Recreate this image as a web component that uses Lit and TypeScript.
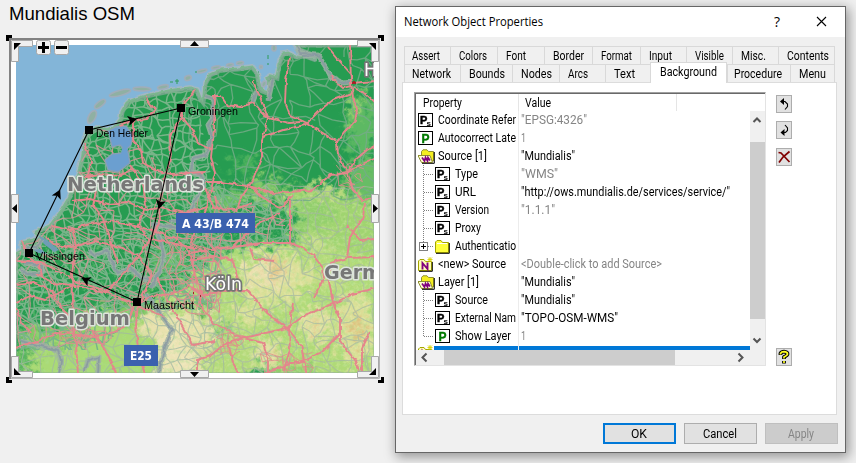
import { LitElement, html, svg, css, TemplateResult } from "lit";
import { customElement } from "lit/decorators.js";
import { classMap } from "lit/directives/class-map.js";
import { styleMap } from "lit/directives/style-map.js";

// Text run fitted to a fixed advance width.
const label = (text: string, w: number, cls = "") => html`<svg class="label ${cls}" width=${w + 2} height="18">
  <text x="0" y="13" textLength=${w} lengthAdjust="spacingAndGlyphs">${text}</text></svg>`;

function rng(seed: number) {
  let s = seed;
  return () => {
    s = (s * 1664525 + 1013904223) % 4294967296;
    return s / 4294967296;
  };
}

// Irregular road mesh: a jittered lattice with some of its links left out.
function mesh(x0: number, y0: number, x1: number, y1: number, step: number, seed: number, keep: number): string {
  const r = rng(seed);
  const cols = Math.ceil((x1 - x0) / step) + 1;
  const rows = Math.ceil((y1 - y0) / step) + 1;
  const pts: number[][][] = [];
  for (let j = 0; j < rows; j++) {
    pts.push([]);
    for (let i = 0; i < cols; i++) {
      pts[j].push([x0 + (i + (r() - 0.5) * 0.95) * step, y0 + (j + (r() - 0.5) * 0.95) * step]);
    }
  }
  let d = "";
  const link = (a: number[], b: number[]) => {
    if (r() > keep) return;
    const k = step * 0.35;
    const mx = (a[0] + b[0]) / 2 + (r() - 0.5) * k;
    const my = (a[1] + b[1]) / 2 + (r() - 0.5) * k;
    d += `M${a[0].toFixed(1)} ${a[1].toFixed(1)}L${mx.toFixed(1)} ${my.toFixed(1)} ${b[0].toFixed(1)} ${b[1].toFixed(1)}`;
  };
  for (let j = 0; j < rows; j++) {
    for (let i = 0; i < cols; i++) {
      if (i + 1 < cols) link(pts[j][i], pts[j][i + 1]);
      if (j + 1 < rows) link(pts[j][i], pts[j + 1][i]);
      if (i + 1 < cols && j + 1 < rows && r() > 0.7) link(pts[j][i], pts[j + 1][i + 1]);
    }
  }
  return d;
}

const LAND =
  "M16 254L23 250 22 243 34 240 41 238 36 232 50 226 60 213 69 198 76 181 82 160 85 140 88 131 93 130 100 128 108 131 114 128 121 119 122 112 127 103 136 99 146 96 160 93 175 90 190 88 197 90 200 98 203 102 204 96 205 84 210 75 221 70 238 69 252 67 257 73 259 84 262 91 268 93 270 86 267 78 270 76 277 78 279 64 283 54 288 53 296 57 305 56 316 60 310 54 300 50 296 45 376 45 376 375 14 375Z";

const ROADS = [
  "M289 58L286 80 285 102 290 115 307 123 337 142 338 155 348 173 353 190 362 200 376 198",
  "M350 45L351 83 353 97 357 110 355 121 344 132 337 142",
  "M328 47L337 58 350 73 352 83 376 81", "M352 93L333 100 320 110 305 125 283 130 263 137",
  "M352 86L343 88 333 80 331 75", "M353 88L366 94 376 103",
  "M213 96L221 96 227 105 240 107 253 103 268 118 290 123 300 122",
  "M253 80L260 97 268 118 262 140 262 157 253 180 241 198 236 212",
  "M215 97L214 130 211 157 215 173 207 207 200 225",
  "M205 182L222 182 252 187 270 193 290 192 313 190 330 175 348 173 360 165 376 158",
  "M252 187L262 197 280 208 292 196", "M348 173L355 160 367 150 376 145",
  "M190 253L210 249 233 247 262 243 290 243 303 248 313 255 323 268 324 278 313 298",
  "M290 200L290 207 290 243", "M205 188L214 208 235 209 253 203", "M280 213L253 227 240 240 233 247",
  "M365 203L363 217 350 237 347 258 331 263 328 276 333 303 340 317 340 342 355 360 361 375",
  "M347 258L376 257", "M376 288L352 294 333 304 305 315 287 328 267 313 247 290 222 291 203 295",
  "M293 303L289 328 290 350 283 372", "M287 328L257 335 227 342 210 356 197 360 197 375",
  "M340 333L322 352 305 360 287 365 264 374", "M200 297L203 310 213 323 240 337 263 343 268 358 268 375",
  "M228 342L233 363 240 375", "M288 329L301 345 307 375", "M369 333L362 349 362 375",
  "M17 262L40 262 60 272 75 281 100 289 120 298 137 305 165 317",
  "M16 347L38 341 55 333 72 334 95 337 110 334 128 324 134 305",
  "M72 228L76 246 72 273 73 300 72 319 76 345 78 375", "M92 330L105 350 117 375",
  "M45 236L56 245 72 247 95 241 120 247 140 257 152 275 140 302",
  "M36 273L53 283 72 285 105 293 121 277 141 253 150 239 180 245 205 250",
  "M181 108L181 120 170 135 171 155 165 178 159 205 160 222 148 243",
  "M145 96L155 110 147 119 130 121 119 125", "M181 108L195 90", "M181 115L192 130 199 144 212 150",
  "M133 121L133 140 141 150 143 163 158 171 171 174 205 172", "M130 165L143 184 146 205 138 225 150 240",
  "M84 143L91 161 88 176 96 191 93 206 104 221 110 241 118 264", "M85 176L100 174 120 176 132 169",
  "M72 201L90 199 108 204 128 202 146 210 160 208 185 213 207 207",
  "M52 226L70 230 90 224 110 221 130 225 152 230 176 239 190 252 195 275 203 296",
  "M138 303L152 296 172 294 190 286 203 295", "M138 303L136 325 138 350 145 375",
  "M157 278L168 301 182 325 193 345 215 341", "M190 245L196 230 210 222 232 229",
  "M232 229L219 214 215 196", "M190 260L213 257 232 259 237 275 241 290 247 290",
  "M250 248L254 259 274 261", "M347 225L360 240 376 239", "M16 303L30 296 45 300 72 286",
  "M22 240L28 257 39 265 42 276", "M16 285L34 283 52 291 62 309 72 319", "M30 333L22 322 16 308",
];

const BORDERS = [
  "M205 96L213 99 213 118 208 125 212 137 206 155 193 158 191 172 201 174 204 186 195 200 191 214 182 222 169 221",
  "M190 214L179 228 165 226 153 224 160 239 164 256 160 271 151 288",
  "M24 263L42 266 42 273 27 274 20 268", "M88 251L96 256 107 250 111 261 118 273 130 268 141 277 151 280",
  "M146 294L155 305 162 316 172 330 165 347 158 375", "M20 341L37 345 58 350 61 361 59 375",
  "M302 56L318 55 325 66 332 78 344 83 352 82", "M85 371L88 360 99 357 98 374",
  "M252 103L257 90", "M273 79L268 101", "M42 240L37 247 28 247 25 255", "M297 46L300 53 317 54",
];

const ISLANDS = [
  [92, 117, 3.5, 7, 28], [100, 104, 2.6, 6.5, 52], [120, 93, 11, 2.6, -15], [142, 89, 9, 2, 2], [163, 87, 5.5, 2, -12],
  [188, 78, 3.4, 2.4, -20], [202, 71, 5, 1.5, -14], [216, 67.5, 4.5, 1.5, -10], [230, 65, 3.6, 1.5, -8], [240, 63, 3.6, 1.6, -8],
  [274, 48, 2.2, 3, 0], [261, 67, 1.6, 1.6, 0], [264, 84, 2, 3, 30],
];

// [cx, cy, rx, ry, colour] of the higher ground
const RELIEF: [number, number, number, number, string][] = [
  [290, 195, 55, 8, "#7fc56b"], [315, 200, 30, 13, "#a5d674"], [320, 195, 15, 8, "#c3dc83"], [362, 125, 15, 28, "#5db964"],
  [354, 105, 4, 13, "#a5d674"], [247, 165, 16, 5, "#52b55f"], [264, 183, 15, 5, "#8bcb6d"], [222, 200, 22, 9, "#69be65"],
  [370, 180, 24, 23, "#68bd65"], [340, 232, 46, 30, "#8bcb69"], [352, 245, 45, 45, "#a0d470"], [313, 212, 20, 16, "#92cf6d"],
  [280, 298, 92, 52, "#acd976"], [335, 330, 76, 76, "#b0da77"], [195, 345, 62, 54, "#b4da79"], [85, 366, 78, 30, "#aada75"],
  [115, 350, 58, 38, "#aada75"], [54, 336, 34, 10, "#85c966"], [145, 314, 27, 12, "#81c666"], [165, 262, 18, 12, "#5bb762"],
  [274, 278, 34, 24, "#dadf97"], [267, 273, 20, 14, "#eadfae"], [315, 325, 16, 15, "#e0e0a0"], [356, 328, 19, 34, "#dadf97"],
  [267, 352, 13, 13, "#e2e0a2"], [180, 350, 25, 34, "#ece3b6"], [197, 333, 18, 17, "#e6e0a9"], [155, 324, 16, 12, "#e9e1ae"],
  [250, 314, 15, 11, "#dadf97"], [318, 245, 12, 7, "#c9dc8d"], [277, 268, 7, 10, "#e2c387"], [356, 329, 6, 14, "#dfbf7d"],
  [316, 327, 5, 5, "#e3c68a"], [277, 352, 4, 4, "#e3c68a"], [287, 371, 28, 6, "#8ecb6d"], [223, 329, 10, 5, "#60b866"],
  [203, 303, 5, 13, "#35a553"], [201, 353, 6, 8, "#cfdb91"], [330, 276, 18, 9, "#c5da87"], [22, 360, 12, 13, "#58b55e"],
];

const CITIES: [string, number, number, number, number][] = [
  ["Groningen", 181, 108, 188, 50], ["Den Helder", 89, 130, 96, 52],
  ["Vlissingen", 29, 253, 36, 49], ["Maastricht", 137, 302, 144, 50],
];

const ARROWS = [[132, 120, -13], [160, 204, 102], [86, 280, 205], [58, 194, -64]];

@customElement("network-map")
class NetworkMap extends LitElement {
  static styles = css`
    :host { display: block; width: 380px; height: 350px; }
    svg { display: block; }
    .city { font: 11px "Liberation Sans", Arial, sans-serif; fill: #000; }
    .place { font-family: "DejaVu Sans", sans-serif; font-weight: bold; fill: #777; stroke: #dde4dc; stroke-width: 3px; paint-order: stroke; stroke-linejoin: round; }
    .town { font-family: "DejaVu Sans", sans-serif; fill: #fff; stroke: #757575; stroke-width: 3.4px; paint-order: stroke; stroke-linejoin: round; }
    .shield { font: bold 12px "DejaVu Sans", sans-serif; fill: #fff; }
  `;

  render() {
    return html`<svg width="380" height="350" viewBox="6 35 380 350">
      <defs>
        <clipPath id="view"><rect x="16" y="45" width="358" height="328" /></clipPath>
        <clipPath id="land"><path d=${LAND} /></clipPath>
        <clipPath id="dense"><path d="M60 130L120 95 195 90 212 180 240 200 290 205 292 240 225 250 212 310 140 310 100 350 16 350 16 230Z" /></clipPath>
        <clipPath id="busy"><path d="M60 130L88 120 125 130 140 150 165 165 205 175 240 205 285 208 285 240 225 250 212 310 140 310 100 350 16 350 16 230Z" /></clipPath>
        <filter id="rough" x="-10%" y="-10%" width="120%" height="120%">
          <feGaussianBlur stdDeviation="3.5" result="b" />
          <feTurbulence type="fractalNoise" baseFrequency="0.13" numOctaves="4" seed="4" />
          <feDisplacementMap in="b" scale="34" xChannelSelector="R" yChannelSelector="G" />
        </filter>
        <filter id="grain" x="0" y="0" width="100%" height="100%">
          <feTurbulence type="fractalNoise" baseFrequency="0.3" numOctaves="2" seed="11" />
          <feColorMatrix values="0 0 0 0 .93  0 0 0 0 .93  0 0 0 0 .6  2.4 0 0 0 -1.05" />
        </filter>
        <filter id="shade" x="0" y="0" width="100%" height="100%">
          <feTurbulence type="fractalNoise" baseFrequency="0.22" numOctaves="3" seed="23" />
          <feColorMatrix values="0 0 0 0 .4  0 0 0 0 .74  0 0 0 0 .3  0 3 0 0 -1.5" />
        </filter>
        <filter id="coast" x="-5%" y="-5%" width="110%" height="110%">
          <feTurbulence type="fractalNoise" baseFrequency="0.15" numOctaves="2" seed="7" />
          <feDisplacementMap in="SourceGraphic" scale="4" xChannelSelector="R" yChannelSelector="G" />
        </filter>
      </defs>

      <path d="M6 41V35H12V38H9V41ZM378 35H384V41H381V38H378ZM6 377H9V380H12V383H6ZM381 377H384V383H378V380H381Z" fill="#000" />
      <rect x="9" y="38" width="371" height="341" fill="#fff" />
      <path d="M9 379V38H380V40H11V379Z" fill="#828282" />
      <path d="M379.500 40V378.500H11" fill="none" stroke="#b4b4b4" />

      <g clip-path="url(#view)">
        <rect x="16" y="45" width="358" height="328" fill="#83b5d8" />
        <g filter="url(#coast)">
          <path d=${LAND} fill="#259c51" stroke="#a3b8c2" stroke-width="6" />
          <path d=${LAND} fill="#259c51" stroke="#7cb78f" stroke-width="3" />
        </g>
        <g clip-path="url(#land)">
          <g filter="url(#rough)">
            ${RELIEF.map(([cx, cy, rx, ry, c]) => svg`<ellipse cx=${cx} cy=${cy} rx=${rx * 1.06} ry=${ry * 1.06} fill=${c} />`)}
          </g>
          <rect x="165" y="195" width="210" height="180" filter="url(#grain)" opacity=".3" />
          <rect x="16" y="235" width="358" height="140" filter="url(#shade)" opacity=".45" />
          <path d=${LAND} fill="none" stroke="#87a898" stroke-width="5" opacity=".75" />
          <path d=${mesh(190, 45, 376, 190, 15, 5, 0.75)} fill="none" stroke="#74ab87" opacity=".85" stroke-width="1.3" />
          <path d=${mesh(190, 190, 376, 376, 13, 57, 0.75)} fill="none" stroke="#a5b7a2" opacity=".7" stroke-width="1.1" />
          <path d=${mesh(14, 230, 215, 376, 13, 15, 0.85)} fill="none" stroke="#a0b8a2" opacity=".75" stroke-width="1.1" />
          <g clip-path="url(#dense)">
            <path d=${mesh(16, 85, 296, 350, 8, 9, 0.88)} fill="none" stroke="#78b489" stroke-width="1.5" />
          </g>
          <g clip-path="url(#busy)">
            <path d=${mesh(16, 90, 296, 350, 14, 31, 0.6)} fill="none" stroke="#d59396" stroke-width="1.1" opacity=".9" />
          </g>
          <path d=${mesh(168, 229, 222, 306, 9, 71, 0.8)} fill="none" stroke="#e08a8e" />
          <path d=${mesh(262, 355, 305, 376, 7, 12, 0.8)} fill="none" stroke="#dd8f8c" opacity=".8" />
          <path d=${mesh(218, 335, 242, 352, 6, 18, 0.7)} fill="none" stroke="#dd8f8c" opacity=".8" />
          <path d=${mesh(338, 166, 362, 184, 8, 45, 0.6)} fill="none" stroke="#dd8f8c" opacity=".8" />
          <path d=${mesh(62, 331, 100, 343, 6, 26, 0.8)} fill="none" stroke="#dd8f8c" opacity=".9" />
        </g>
        <g fill="#8fb0a3" stroke="#a0adba" stroke-width="1.600">
          ${ISLANDS.map(([x, y, rx, ry, a]) => svg`<ellipse cx=${x} cy=${y} rx=${rx} ry=${ry} transform="rotate(${a} ${x} ${y})" />`)}
        </g>
        <path d="M170 82h3m2-1h4m-2-2v5m18-12h2m70-8h2m-11 8h1m9-17v4" stroke="#2d9c58" fill="none" />
        <path d="M108 131L116 127 126 126 133 136 131 145 125 151 120 145 112 147 110 138ZM105 160L112 154 128 152 130 163 118 172 108 170Z" fill="#6b9fd0" stroke="#8a9fb5" stroke-width="1.3" />
        <path d="M122 148L128 149 127 155 121 155Z" fill="#6b9fd0" />
        <path d="M38 235L47 240 59 250 54 252 44 244ZM29 247L41 249 47 254 38 253Z" fill="#6f9db5" />
        <g filter="url(#coast)" fill="none" stroke-linejoin="round">
          ${BORDERS.map((d) => svg`<path d=${d} stroke="#9fb0a6" stroke-width="5" opacity=".85" />`)}
          ${BORDERS.map((d) => svg`<path d=${d} stroke="#8796a3" stroke-width="1.8" opacity=".8" />`)}
          ${ROADS.map((d) => svg`<path d=${d} stroke="#e4868c" stroke-width="1.9" />`)}
        </g>
        <path d="M352 83h4m-2-2v3M200 296h1m-8-3h1" stroke="#a82228" stroke-width="2" />

        <text class="place" x="67" y="191" font-size="20" textLength="137" lengthAdjust="spacingAndGlyphs">Netherlands</text>
        <text class="place" x="40" y="325" font-size="19.500" textLength="90" lengthAdjust="spacingAndGlyphs">Belgium</text>
        <text class="place" x="324" y="279" font-size="19" textLength="58" lengthAdjust="spacingAndGlyphs">Germ</text>
        <text class="town" x="205" y="290" font-size="17" textLength="37" lengthAdjust="spacingAndGlyphs">Köln</text>
        <text class="town" x="364" y="76" font-size="17">H</text>
        <rect x="176" y="213" width="79" height="20" fill="#3b61ae" />
        <text class="shield" x="182" y="227.500" textLength="67" lengthAdjust="spacingAndGlyphs">A 43/B 474</text>
        <rect x="124" y="345" width="34" height="21" fill="#3b61ae" />
        <text class="shield" x="130" y="360" textLength="22" lengthAdjust="spacingAndGlyphs">E25</text>
      </g>

      <path d="M181 108L89 130 29 253 137 302Z" fill="none" stroke="#000" stroke-width="1.1" />
      ${ARROWS.map(([x, y, a]) => svg`<path d="M5 0L-4 -5 -2 0 -4 5Z" transform="translate(${x} ${y}) rotate(${a})" />`)}
      ${CITIES.map(([n, x, y, tx, w]) => svg`<rect x=${x - 4} y=${y - 4} width="8" height="8" />
        <text class="city" x=${tx} y=${y + 7} textLength=${w} lengthAdjust="spacingAndGlyphs">${n}</text>`)}

      <g fill="#f0f0f0" stroke="#a8a8a8">
        <path d="M11.500 40.500H32.500V46.500H18.500V61.500H11.500Z" />
        <path d="M378.500 40.500H357.500V46.500H371.500V61.500H378.500Z" />
        <path d="M11.500 377.500H32.500V371.500H18.500V356.500H11.500Z" />
        <path d="M378.500 377.500H357.500V371.500H371.500V356.500H378.500Z" />
        <path d="M180.500 40.500h28v7h-28zM180.500 370.500h28v7h-28zM11.500 194.500h7v28h-7zM371.500 194.500h7v28h-7z" />
        <rect x="36.500" y="40.500" width="14" height="14" rx="2" />
        <rect x="54.500" y="40.500" width="14" height="14" rx="2" />
      </g>
      <path d="M14 43H21L14 50ZM376 43H369L376 50ZM14 375H21L14 368ZM376 375H369L376 368ZM190 46H199L194.500 41ZM190 372H199L194.500 377ZM17 204V213L12 208.500ZM373 204V213L378 208.500Z" />
      <path d="M38 47.500H49M43.500 42V53M56 47.500H67" stroke="#000" stroke-width="3" />
    </svg>`;
  }
}

type Icon = "ps" | "p" | "open" | "folder" | "new";

const starBurst = svg`<path d="M12 0V5M9.500 2.500H14.500M10 .5L14 4.500M14 .5L10 4.500" stroke="#d9d500" stroke-width=".9" />`;

const ICONS: Record<Icon, TemplateResult> = {
  ps: html`<svg width="15" height="15"><rect x=".5" y=".5" width="14" height="13" fill="#fff" stroke="#000" />
    <text class="mark heavy" x="2" y="11" font-size="11">P</text><text class="mark" x="8.500" y="12.500" font-size="8">s</text></svg>`,
  p: html`<svg width="15" height="15"><rect x=".5" y=".5" width="14" height="13" fill="#fff" stroke="#000" />
    <text class="mark green" x="3.500" y="11.500" font-size="12">P</text></svg>`,
  folder: html`<svg width="15" height="15"><path d="M.5 13.500V3L2 1.500H6L7.500 3.500H13.500V13.500Z" fill="#ffff3c" stroke="#a5a500" /><path d="M1 14.300H14.300V4" fill="none" stroke="#000" /><path d="M2 4.500H12" stroke="#fff" /></svg>`,
  open: html`<svg width="17" height="15"><path d="M3.500 12V2.500L5 .8H9L10.500 2.500H15.500V12Z" fill="#f4ee20" stroke="#8f8f30" />
    <path d="M3.500 13.500L0 6.500H12L14.500 13.500Z" fill="#ffffd0" stroke="#8f8f30" /><path d="M4 14.300H16.300V3" fill="none" stroke="#000" />
    <path d="M4 8.500L6.500 12 7.500 8.500 9.500 12 10 8.500 12 11.500" fill="none" stroke="#800080" stroke-width="1.700" /></svg>`,
  new: html`<svg width="17" height="15"><path d="M.5 13.500V4L2 2.500H6L7.500 4.500H13.500V13.500Z" fill="#ffffb4" stroke="#a5a500" /><path d="M1 14.300H14.300V5" fill="none" stroke="#000" />
    <path d="M4.500 12.500V6L9.500 12V5.500" fill="none" stroke="#800080" stroke-width="1.900" />${starBurst}</svg>`,
};

interface Row { name: string; nw: number; icon: Icon; value?: string; vw?: number; dim?: boolean; child?: boolean; last?: boolean; plus?: boolean; }

const ROWS: Row[] = [
  { name: "Coordinate Refer", nw: 78, icon: "ps", value: '"EPSG:4326"', vw: 66, dim: true },
  { name: "Autocorrect Late", nw: 78, icon: "p", value: "1", vw: 5, dim: true },
  { name: "Source [1]", nw: 49, icon: "open", value: '"Mundialis"', vw: 54 },
  { name: "Type", nw: 23, icon: "ps", value: '"WMS"', vw: 37, dim: true, child: true },
  { name: "URL", nw: 21, icon: "ps", value: '"http://ows.mundialis.de/services/service/"', vw: 209, child: true },
  { name: "Version", nw: 34, icon: "ps", value: '"1.1.1"', vw: 34, dim: true, child: true },
  { name: "Proxy", nw: 26, icon: "ps", child: true },
  { name: "Authenticatio", nw: 61, icon: "folder", child: true, last: true, plus: true },
  { name: "<new> Source", nw: 68, icon: "new", value: "<Double-click to add Source>", vw: 141, dim: true },
  { name: "Layer [1]", nw: 41, icon: "open", value: '"Mundialis"', vw: 54 },
  { name: "Source", nw: 33, icon: "ps", value: '"Mundialis"', vw: 54, child: true },
  { name: "External Nam", nw: 61, icon: "ps", value: '"TOPO-OSM-WMS"', vw: 97, child: true },
  { name: "Show Layer", nw: 56, icon: "p", value: "1", vw: 5, dim: true, child: true, last: true },
];

// [caption, caption width, tab width]
type Tab = [string, number, number];
const BACK_TABS: Tab[] = [["Assert", 28, 46], ["Colors", 28, 47], ["Font", 20, 47], ["Border", 31, 48], ["Format", 31, 48],
  ["Input", 23, 46], ["Visible", 29, 46], ["Misc.", 25, 46], ["Contents", 42, 57]];
const FRONT_TABS: Tab[] = [["Network", 39, 56], ["Bounds", 36, 52], ["Nodes", 31, 47], ["Arcs", 20, 46], ["Text", 21, 45],
  ["Background", 57, 77], ["Procedure", 48, 63], ["Menu", 27, 45]];

@customElement("properties-dialog")
class PropertiesDialog extends LitElement {
  static styles = css`
    :host { display: flex; flex-direction: column; box-sizing: border-box; width: 451px; height: 447px; border: 1px solid #666;
      background: #f0f0f0; box-shadow: 2px 3px 11px 1px rgba(0,0,0,.38); font: 12px Roboto, sans-serif; }
    svg { display: block; flex: none; }
    .label { overflow: visible; }
    .label text { font: 12px Roboto, sans-serif; fill: #000; }
    .mark { font-family: "Liberation Sans", Arial, sans-serif; font-weight: bold; }
    .heavy { stroke: #000; stroke-width: .5px; }
    .green { fill: #007a00; stroke: #007a00; stroke-width: .4px; }
    .dim text { fill: #858585; }
    .title { display: flex; align-items: center; height: 30px; background: #fff; padding-left: 8px; }
    .title .label text { font: 12px "Open Sans", "Noto Sans", sans-serif; }
    .glyphs { margin-left: auto; overflow: visible; }
    .tabs { display: flex; padding-left: 8px; height: 18px; }
    .tabs.back { margin-top: 9px; }
    .tab { box-sizing: border-box; height: 18px; border: 1px solid #d9d9d9; border-width: 1px 0 0 1px; padding-left: 8px; flex: none; }
    .tab:first-child { padding-left: 7px; }
    .tab:last-child { border-right-width: 1px; }
    .tab.sel { position: relative; height: 21px; margin: -2px 0 -1px; background: #fff; border-right-width: 1px; padding-left: 9px; z-index: 1; }
    .tab.sel + .tab { padding-left: 6px; }
    .panel { box-sizing: border-box; display: flex; gap: 10px; width: 435px; height: 333px; margin-left: 6px; border: 1px solid #dcdcdc; background: #fff; padding: 9px 0 0 11px; }
    .list { box-sizing: border-box; width: 352px; height: 274px; border: 1px solid #e3e3e3; border-top-color: #a0a0a0; border-left-color: #a0a0a0; }
    .inner { box-sizing: border-box; height: 272px; border: solid #696969; border-width: 1px 0 0 1px; display: grid; grid-template: 17px 239px 15px / 334px 15px; overflow: hidden; }
    .head { grid-column: span 2; display: flex; }
    .head div { box-sizing: border-box; border-right: 1px solid #e5e5e5; padding-left: 7px; }
    .head .h1 { width: 103px; } .head .h2 { width: 158px; padding-left: 6px; } .head .h3 { border: 0; }
    .rows { overflow: hidden; }
    .row { display: flex; height: 18px; }
    .name { box-sizing: border-box; display: flex; align-items: center; width: 103px; border-right: 1px solid #ececec; padding-left: 2px; }
    .icon { width: 20px; height: 15px; flex: none; }
    .val { padding-left: 2px; }
    .row .label { margin-top: -1px; }
    .val .label { margin-top: 0; }
    .picked { display: flex; height: 6px; }
    .picked .name { height: 6px; align-items: flex-start; overflow: hidden; }
    .picked .icon { width: 16px; }
    .bar { flex: 1; height: 4px; margin-top: 1px; background: #0078d7; }
    .vbar, .hbar { background: #f0f0f0; display: flex; }
    .vbar { flex-direction: column; }
    .vthumb { height: 177px; background: #cdcdcd; }
    .hbar { grid-column: span 2; }
    .hthumb { width: 231px; background: #cdcdcd; }
    .side { display: flex; flex-direction: column; padding-top: 3px; }
    .tool { box-sizing: border-box; width: 16px; height: 18px; border: 1px solid #adadad; background: #e1e1e1; margin-bottom: 8px; }
    .tool.del { margin-top: 1px; }
    .tool.help { margin-top: 174px; }
    .actions { display: flex; gap: 8px; padding: 8px 0 0 207px; }
    .btn { box-sizing: border-box; width: 73px; height: 21px; border: 1px solid #adadad; background: #e1e1e1; display: flex; justify-content: center; align-items: center; }
    .btn.ok { outline: 1px solid #0078d7; outline-offset: -2px; border-color: #0078d7; }
    .btn.off { background: #ccc; border-color: #bfbfbf; }
  `;

  private branch(r: Row) {
    return html`<svg width="17" height="18"><path d="M5.500 0V${r.last ? 9 : 18}M6 9.500H16" fill="none" stroke="#808080" stroke-dasharray="1 1" />
      ${r.plus ? svg`<rect x="1.500" y="5.500" width="8" height="8" fill="#fff" stroke="#808080" /><path d="M3 9.500H8M5.500 7V12" stroke="#000" />` : ""}</svg>`;
  }

  private tab([t, w, full]: Tab) {
    return html`<div class=${classMap({ tab: true, sel: t === "Background" })} style=${styleMap({ width: `${full}px` })}>${label(t, w)}</div>`;
  }

  render() {
    return html`
      <div class="title">${label("Network Object Properties", 139)}
        <svg class="glyphs" width="74" height="30"><text x="3" y="19.500" font-size="14" font-family="Open Sans">?</text>
          <path d="M46 10L55 19M55 10L46 19" stroke="#000" stroke-width="1.100" /></svg></div>
      <div class="tabs back">${BACK_TABS.map((t) => this.tab(t))}</div>
      <div class="tabs">${FRONT_TABS.map((t) => this.tab(t))}</div>
      <div class="panel">
        <div class="list"><div class="inner">
          <div class="head"><div class="h1">${label("Property", 39)}</div><div class="h2">${label("Value", 26)}</div><div class="h3"></div></div>
          <div class="rows">
            ${ROWS.map((r) => html`<div class=${classMap({ row: true, child: !!r.child })}>
              <div class="name">${r.child ? this.branch(r) : ""}<div class="icon">${ICONS[r.icon]}</div>${label(r.name, r.nw)}</div>
              <div class="val">${r.value ? label(r.value, r.vw!, r.dim ? "dim" : "") : ""}</div></div>`)}
            <div class="picked"><div class="name"><div class="icon">${ICONS.new}</div><div class="bar"></div></div><div class="bar"></div></div>
          </div>
          <div class="vbar">
            <svg width="15" height="31"><path d="M3.500 11L7 7.500 10.500 11" fill="none" stroke="#555" stroke-width="2" /></svg>
            <div class="vthumb"></div>
            <svg width="15" height="30"><path d="M3.500 19.500L7 23 10.500 19.500" fill="none" stroke="#555" stroke-width="2" /></svg>
          </div>
          <div class="hbar">
            <svg width="28" height="15"><path d="M10.500 3.500L6.500 7.500 10.500 11.500" fill="none" stroke="#555" stroke-width="2" /></svg>
            <div class="hthumb"></div>
            <svg width="75" height="15"><path d="M63.500 3.500L67.500 7.500 63.500 11.500" fill="none" stroke="#555" stroke-width="2" /></svg>
          </div>
        </div></div>
        <div class="side">
          <div class="tool"><svg width="14" height="16"><path d="M3 5.500L7 2V9Z" /><path d="M6 5.500H8L10.500 8V10.500L8 13.500" fill="none" stroke="#000" stroke-width="1.100" /></svg></div>
          <div class="tool"><svg width="14" height="16"><path d="M3.500 10.500L7.500 7V14Z" /><path d="M7 10.500H8.500L10.500 8.500V6L8 3" fill="none" stroke="#000" stroke-width="1.100" /></svg></div>
          <div class="tool del"><svg width="14" height="16"><path d="M1.500 3.500L4 4 12.500 13M12.500 2.500L6 8 2 13.500" fill="none" stroke="#800000" stroke-width="1.700" /></svg></div>
          <div class="tool help"><svg width="14" height="16"><g fill="none" stroke-linejoin="round"><path d="M3.500 6V4.500Q4.500 2.700 7 2.700 10.500 2.900 10.500 5 10.500 6.300 7 8V10M7 12V14.500" stroke="#000" stroke-width="3.800" /><path d="M3.500 5.500V4.500Q4.500 2.700 7 2.700 10.500 2.900 10.500 5 10.500 6.300 7 8V9.500M7 12V14" stroke="#ffff20" stroke-width="1.700" /></g></svg></div>
        </div>
      </div>
      <div class="actions">
        <div class="btn ok">${label("OK", 16)}</div>
        <div class="btn">${label("Cancel", 34)}</div>
        <div class="btn off">${label("Apply", 26, "dim")}</div>
      </div>`;
  }
}

@customElement("app-root")
class AppRoot extends LitElement {
  static styles = css`
    :host { display: block; position: relative; width: 856px; height: 463px; overflow: hidden; background: #f0f0f0; }
    .canvas { display: flex; flex-direction: column; padding-left: 6px; }
    .heading { height: 35px; }
    .heading text { font: 18.500px "Liberation Sans", Arial, sans-serif; }
    properties-dialog { position: absolute; left: 395px; top: 6px; }
  `;

  render() {
    return html`<div class="canvas">
        <svg class="heading" width="300" height="35"><text x="3" y="20" textLength="126" lengthAdjust="spacingAndGlyphs">Mundialis OSM</text></svg>
        <network-map></network-map>
      </div>
      <properties-dialog></properties-dialog>`;
  }
}
